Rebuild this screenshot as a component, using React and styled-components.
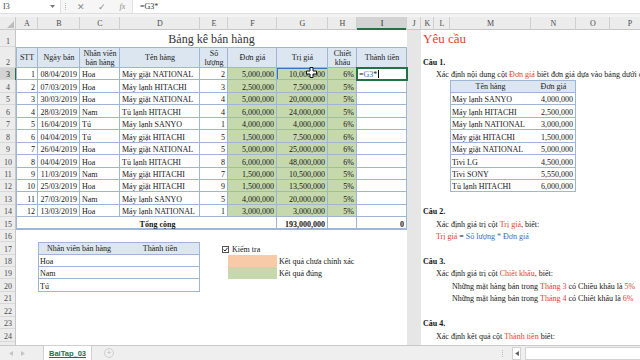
import React from 'react';
import styled, { createGlobalStyle } from 'styled-components';

const SERIF = `"Liberation Serif", "Times New Roman", serif`;
const SANS = `"Liberation Sans", Arial, sans-serif`;

const GlobalStyle = createGlobalStyle`
  html, body { margin: 0; padding: 0; background: #fff; }
  body { font-family: ${SERIF}; }
`;

const TB = '#9fb5d6';
const HEAD_BLUE = '#dce6f1';
const GREEN = '#c6d9ad';
const ORANGE = '#f8caa8';
const RED = '#e2412f';
const BLUE = '#2f72b8';
const ROW_H = 12.45;
const COLS = [16, 22, 42, 40, 80, 28, 49, 51, 29, 50, 14, 13, 16, 81, 45, 34, 40];
const LETTERS = ['A', 'B', 'C', 'D', 'E', 'F', 'G', 'H', 'I', 'J', 'K', 'L', 'M', 'N', 'O', 'P'];
const C = LETTERS.reduce((o, l, i) => ({ ...o, [l]: i + 2 }), {});

const shadow = (p) => {
  const s = [];
  if (p.$bt) s.push(`inset 0 1px 0 ${p.$bt}`);
  if (p.$bb) s.push(`inset 0 -${p.$bbw || 1}px 0 ${p.$bb}`);
  if (p.$bl) s.push(`inset 1px 0 0 ${p.$bl}`);
  if (p.$br) s.push(`inset -1px 0 0 ${p.$br}`);
  if (p.$ring) s.push(`inset 0 0 0 1px ${p.$ring}`);
  return s.length ? s.join(', ') : 'none';
};

const bd = (sides, color = TB) => {
  const o = {};
  if (sides.includes('t')) o.$bt = color;
  if (sides.includes('b')) o.$bb = color;
  if (sides.includes('l')) o.$bl = color;
  if (sides.includes('r')) o.$br = color;
  return o;
};

const Frame = styled.div`
  width: 640px;
  height: 360px;
  overflow: hidden;
  display: flex;
  flex-direction: column;
  background: #fff;
`;

/* ---------- formula bar ---------- */
const FormulaBar = styled.div`
  height: 14px;
  flex: 0 0 14px;
  display: flex;
  align-items: stretch;
  background: #f6f6f6;
  border-bottom: 1px solid #dedede;
  box-sizing: border-box;
  font-family: ${SERIF};
  font-size: 8px;
  color: #444;
`;

const NameBox = styled.div`
  width: 61px;
  display: flex;
  align-items: center;
  justify-content: space-between;
  padding: 0 5px 0 3px;
  box-sizing: border-box;
  background: #fff;
  border-right: 1px solid #e0e0e0;
`;

const BarIcons = styled.div`
  width: 71px;
  display: flex;
  align-items: center;
  color: #8a8a8a;
  font-family: ${SANS};
`;

const BarIcon = styled.span`
  width: ${(p) => p.$w}px;
  text-align: center;
  font-size: ${(p) => p.$size || 9}px;
  font-style: ${(p) => (p.$italic ? 'italic' : 'normal')};
  font-family: ${(p) => (p.$italic ? SERIF : SANS)};
  color: #8a8a8a;
`;

const Grip = styled.span`
  width: 0;
  height: 7px;
  margin: 0 5px 0 4px;
  border-left: 1px dotted #b8b8b8;
`;

const FormulaInput = styled.div`
  flex: 1;
  display: flex;
  align-items: center;
  padding-left: 7px;
  background: #fff;
  border-left: 1px solid #e0e0e0;
  color: #333;
`;

const Band = styled.div`
  height: 3px;
  flex: 0 0 3px;
  background: #f3f3f3;
`;

/* ---------- sheet grid ---------- */
const Sheet = styled.div`
  flex: 1 1 auto;
  min-height: 0;
  display: grid;
  grid-template-columns: ${COLS.map((c) => `${c}px`).join(' ')};
  grid-template-rows: 13px 17px 21px repeat(23, ${ROW_H}px);
  overflow: hidden;
  font-family: ${SERIF};
  font-size: 8px;
  color: #151515;
`;

const Corner = styled.div`
  grid-row: 1;
  grid-column: 1;
  background: #ececec;
  box-shadow: inset -1px -1px 0 #c9c9c9;
  position: relative;
  &::after {
    content: '';
    position: absolute;
    right: 2px;
    bottom: 2px;
    border-left: 7px solid transparent;
    border-bottom: 7px solid #bdbdbd;
  }
`;

const ColHead = styled.div`
  grid-row: 1;
  grid-column: ${(p) => p.$c};
  display: flex;
  align-items: center;
  justify-content: center;
  background: ${(p) => (p.$sel ? '#d3d3d3' : '#ececec')};
  color: ${(p) => (p.$sel ? '#222' : '#4a4a4a')};
  box-shadow: inset -1px 0 0 #cfcfcf, inset 0 ${(p) => (p.$sel ? '-2px 0 #217346' : '-1px 0 #c6c6c6')};
  font-size: 8px;
`;

const RowHead = styled.div`
  grid-row: ${(p) => p.$r + 1};
  grid-column: 1;
  display: flex;
  align-items: flex-end;
  justify-content: center;
  padding-bottom: 1px;
  box-sizing: border-box;
  background: ${(p) => (p.$sel ? '#d3d3d3' : '#ececec')};
  color: ${(p) => (p.$sel ? '#222' : '#4a4a4a')};
  box-shadow: inset -1px 0 0 ${(p) => (p.$sel ? '#217346' : '#c6c6c6')}, inset 0 -1px 0 #d8d8d8;
  font-size: 8px;
`;

const GrayCol = styled.div`
  grid-row: 2 / span 25;
  grid-column: ${C.J};
  background: #e6e6e6;
`;

const Cell = styled.div`
  grid-row: ${(p) => p.$r + 1};
  grid-column: ${(p) => p.$c} / span ${(p) => p.$s || 1};
  position: relative;
  min-width: 0;
  box-sizing: border-box;
  display: flex;
  align-items: ${(p) => p.$v || 'flex-end'};
  justify-content: ${(p) => (p.$align === 'right' ? 'flex-end' : p.$align === 'center' ? 'center' : 'flex-start')};
  padding: 0 ${(p) => (p.$align === 'right' ? 3 : 2)}px 1px ${(p) => p.$pl ?? 2}px;
  white-space: nowrap;
  overflow: visible;
  background: ${(p) => p.$bg || 'transparent'};
  font-weight: ${(p) => (p.$bold ? 700 : 400)};
  font-size: ${(p) => p.$size || 8}px;
  color: ${(p) => p.$color || '#151515'};
  line-height: ${(p) => (p.$size ? p.$size + 2 : 9)}px;
  box-shadow: ${shadow};
`;

const HeadCell = styled(Cell)`
  align-items: center;
  justify-content: center;
  text-align: center;
  white-space: normal;
  padding: 0 1px;
  background: ${HEAD_BLUE};
  line-height: 9px;
  color: #222;
`;

const EditCell = styled(Cell)`
  background: #fff;
  outline: 2px solid #217346;
  outline-offset: -1px;
  z-index: 2;
`;

const Red = styled.span`
  color: ${RED};
`;
const Blue = styled.span`
  color: ${BLUE};
`;
const Ref = styled.span`
  color: #3d6fc4;
`;

const TextCaret = styled.span`
  display: inline-block;
  width: 1px;
  height: 8px;
  margin-left: 1px;
  background: #111;
  align-self: center;
`;

const CursorMark = styled.svg`
  position: absolute;
  left: 29px;
  top: -1px;
  z-index: 3;
`;

const CheckLabel = styled.span`
  display: inline-flex;
  align-items: center;
  gap: 3px;
`;

/* ---------- tab bar ---------- */
const TabBar = styled.div`
  height: 15px;
  flex: 0 0 15px;
  display: flex;
  align-items: stretch;
  background: #efefef;
  border-top: 1px solid #c8c8c8;
  box-sizing: border-box;
  font-family: ${SANS};
`;

const NavArrows = styled.div`
  width: 44px;
  display: flex;
  align-items: center;
  gap: 8px;
  padding-left: 9px;
  box-sizing: border-box;
`;

const SheetTab = styled.div`
  width: 47px;
  display: flex;
  align-items: center;
  justify-content: center;
  background: #fff;
  color: #217346;
  font-weight: 700;
  font-size: 7.5px;
  box-shadow: 0 0 0 1px #d0d0d0;
  position: relative;
  &::after {
    content: '';
    position: absolute;
    left: 5px;
    right: 5px;
    bottom: 2px;
    height: 1.5px;
    background: #217346;
  }
`;

const AddSheet = styled.div`
  margin-left: 13px;
  width: 8px;
  height: 8px;
  align-self: center;
  border-radius: 50%;
  border: 1px solid #cfcfcf;
  color: #b5b5b5;
  font-size: 7px;
  line-height: 8px;
  text-align: center;
`;

const ScrollArea = styled.div`
  margin-left: auto;
  width: 142px;
  display: flex;
  align-items: center;
  gap: 4px;
`;

const ScrollBtn = styled.div`
  width: 7px;
  height: 11px;
  border: 1px solid #d2d2d2;
  background: #fff;
  display: flex;
  align-items: center;
  justify-content: center;
`;

const ScrollTrack = styled.div`
  flex: 1;
  height: 11px;
  border: 1px solid #d2d2d2;
  border-right: none;
  background: #fff;
`;

const Tri = ({ dir = 'left', color = '#c4c4c4' }) => (
  <svg width="4" height="5" viewBox="0 0 4 5">
    <path d={dir === 'left' ? 'M4 0 L0 2.5 L4 5 Z' : 'M0 0 L4 2.5 L0 5 Z'} fill={color} />
  </svg>
);

/* ---------- data ---------- */
const sales = [
  [1, '08/04/2019', 'Hoa', 'Máy giặt NATIONAL', 2, '5,000,000', '10,000,000', '6%'],
  [2, '07/03/2019', 'Hoa', 'Máy lạnh HITACHI', 3, '2,500,000', '7,500,000', '5%'],
  [3, '30/03/2019', 'Hoa', 'Máy giặt NATIONAL', 4, '5,000,000', '20,000,000', '5%'],
  [4, '28/03/2019', 'Nam', 'Tủ lạnh HITACHI', 4, '6,000,000', '24,000,000', '5%'],
  [5, '16/04/2019', 'Tú', 'Máy lạnh SANYO', 1, '4,000,000', '4,000,000', '6%'],
  [6, '04/04/2019', 'Tú', 'Máy giặt HITACHI', 5, '1,500,000', '7,500,000', '6%'],
  [7, '26/04/2019', 'Hoa', 'Máy giặt NATIONAL', 5, '5,000,000', '25,000,000', '6%'],
  [8, '04/04/2019', 'Hoa', 'Tủ lạnh HITACHI', 8, '6,000,000', '48,000,000', '6%'],
  [9, '11/03/2019', 'Nam', 'Máy giặt HITACHI', 7, '1,500,000', '10,500,000', '5%'],
  [10, '25/03/2019', 'Hoa', 'Máy giặt HITACHI', 9, '1,500,000', '13,500,000', '5%'],
  [11, '27/03/2019', 'Nam', 'Máy lạnh SANYO', 5, '4,000,000', '20,000,000', '5%'],
  [12, '13/03/2019', 'Hoa', 'Máy lạnh NATIONAL', 1, '3,000,000', '3,000,000', '5%'],
];

const priceList = [
  ['Máy lạnh SANYO', '4,000,000'],
  ['Máy lạnh HITACHI', '2,500,000'],
  ['Máy lạnh NATIONAL', '3,000,000'],
  ['Máy giặt HITACHI', '1,500,000'],
  ['Máy giặt NATIONAL', '5,000,000'],
  ['Tivi LG', '4,500,000'],
  ['Tivi SONY', '5,550,000'],
  ['Tủ lạnh HITACHI', '6,000,000'],
];

const headers = [
  ['A', 'STT'],
  ['B', 'Ngày bán'],
  ['C', <>Nhân viên<br />bán hàng</>],
  ['D', 'Tên hàng'],
  ['E', <>Số<br />lượng</>],
  ['F', 'Đơn giá'],
  ['G', 'Trị giá'],
  ['H', <>Chiết<br />khấu</>],
  ['I', 'Thành tiền'],
];

function SalesRow({ row, data }) {
  const [stt, date, name, prod, qty, price, value, disc] = data;
  const first = row === 3;
  return (
    <>
      <Cell $r={row} $c={C.A} $align="right" {...bd('lrb')}>{stt}</Cell>
      <Cell $r={row} $c={C.B} $align="right" {...bd('rb')}>{date}</Cell>
      <Cell $r={row} $c={C.C} {...bd('rb')}>{name}</Cell>
      <Cell $r={row} $c={C.D} {...bd('rb')}>{prod}</Cell>
      <Cell $r={row} $c={C.E} $align="right" {...bd('rb')}>{qty}</Cell>
      <Cell $r={row} $c={C.F} $align="right" $bg={GREEN} {...bd('rb')}>{price}</Cell>
      <Cell $r={row} $c={C.G} $align="right" $bg={GREEN} {...bd('rb')} $ring={first ? '#3d6fc4' : undefined}>
        {value}
        {first && (
          <CursorMark width="11" height="11" viewBox="0 0 22 22">
            <path d="M8 1 H14 V8 H21 V14 H14 V21 H8 V14 H1 V8 H8 Z" fill="#fff" stroke="#111" strokeWidth="2" />
          </CursorMark>
        )}
      </Cell>
      <Cell $r={row} $c={C.H} $align="right" $bg={GREEN} {...bd('rb')}>{disc}</Cell>
      {first ? (
        <EditCell $r={row} $c={C.I} {...bd('rb')}>
          =<Ref>G3</Ref>*<TextCaret />
        </EditCell>
      ) : (
        <Cell $r={row} $c={C.I} {...bd('rb')} />
      )}
    </>
  );
}

export default function App() {
  return (
    <>
      <GlobalStyle />
      <Frame>
        <FormulaBar>
          <NameBox>
            <span>I3</span>
            <svg width="5" height="3" viewBox="0 0 5 3">
              <path d="M0 0 H5 L2.5 3 Z" fill="#777" />
            </svg>
          </NameBox>
          <BarIcons>
            <Grip />
            <BarIcon $w={20} $size={9}>✕</BarIcon>
            <BarIcon $w={22} $size={9}>✓</BarIcon>
            <BarIcon $w={19} $size={8} $italic>fx</BarIcon>
          </BarIcons>
          <FormulaInput>=G3*</FormulaInput>
        </FormulaBar>
        <Band />
        <Sheet>
          <Corner />
          {LETTERS.map((l) => (
            <ColHead key={l} $c={C[l]} $sel={l === 'I'}>{l}</ColHead>
          ))}
          {Array.from({ length: 25 }, (_, i) => (
            <RowHead key={i} $r={i + 1} $sel={i + 1 === 3}>{i + 1}</RowHead>
          ))}
          <GrayCol />

          {/* Row 1: title */}
          <Cell $r={1} $c={C.A} $s={9} $align="center" $size={12} $color="#333">Bảng kê bán hàng</Cell>

          {/* Row 2: headers */}
          {headers.map(([col, label]) => (
            <HeadCell key={col} $r={2} $c={C[col]} {...bd(col === 'A' ? 'tlrb' : 'trb')}>{label}</HeadCell>
          ))}

          {sales.map((d, i) => (
            <SalesRow key={i} row={i + 3} data={d} />
          ))}

          {/* Row 15: totals */}
          <Cell $r={15} $c={C.A} {...bd('lb')} $bbw={2} />
          <Cell $r={15} $c={C.B} $s={5} $align="center" $bold {...bd('rb')} $bbw={2}>Tổng cộng</Cell>
          <Cell $r={15} $c={C.G} $align="right" $bold {...bd('rb')} $bbw={2}>193,000,000</Cell>
          <Cell $r={15} $c={C.H} {...bd('rb')} $bbw={2} />
          <Cell $r={15} $c={C.I} $align="right" $bold {...bd('rb')} $bbw={2}>0</Cell>

          {/* Summary table rows 17-20 */}
          <HeadCell $r={17} $c={C.B} $s={2} {...bd('tlb')}>Nhân viên bán hàng</HeadCell>
          <HeadCell $r={17} $c={C.D} {...bd('trb')}>Thành tiền</HeadCell>
          {['Hoa', 'Nam', 'Tú'].map((n, i) => (
            <Cell key={n} $r={18 + i} $c={C.B} $s={3} {...bd('lrb')}>{n}</Cell>
          ))}

          {/* Legend */}
          <Cell $r={17} $c={C.E} $s={3} $pl={22}>
            <CheckLabel>
              <svg width="7" height="7" viewBox="0 0 7 7">
                <rect x="0.5" y="0.5" width="6" height="6" fill="#fff" stroke="#555" />
                <path d="M1.5 3.6 L3 5 L5.6 1.8" fill="none" stroke="#222" strokeWidth="1" />
              </svg>
              Kiểm tra
            </CheckLabel>
          </Cell>
          <Cell $r={18} $c={C.F} $bg={ORANGE} />
          <Cell $r={18} $c={C.G} $s={3}>Kết quả chưa chính xác</Cell>
          <Cell $r={19} $c={C.F} $bg={GREEN} />
          <Cell $r={19} $c={C.G} $s={3}>Kết quả đúng</Cell>

          {/* Right pane */}
          <Cell $r={1} $c={C.K} $s={6} $size={13} $color={RED}>Yêu cầu</Cell>
          <Cell $r={2} $c={C.K} $s={6} $bold>Câu 1.</Cell>
          <Cell $r={3} $c={C.L} $s={5}>
            Xác định nội dung cột&nbsp;<Red>Đơn giá</Red>&nbsp;biết đơn giá dựa vào bảng dưới đây
          </Cell>
          <HeadCell $r={4} $c={C.M} {...bd('tlb')}>Tên hàng</HeadCell>
          <HeadCell $r={4} $c={C.N} {...bd('trb')}>Đơn giá</HeadCell>
          {priceList.map(([n, p], i) => (
            <React.Fragment key={n}>
              <Cell $r={5 + i} $c={C.M} {...bd('lb')}>{n}</Cell>
              <Cell $r={5 + i} $c={C.N} $align="right" {...bd('rb')}>{p}</Cell>
            </React.Fragment>
          ))}

          <Cell $r={14} $c={C.K} $s={6} $bold>Câu 2.</Cell>
          <Cell $r={15} $c={C.L} $s={5}>
            Xác định giá trị cột&nbsp;<Red>Trị giá</Red>, biết:
          </Cell>
          <Cell $r={16} $c={C.L} $s={5}>
            <Red>Trị giá</Red>&nbsp;=&nbsp;<Blue>Số lượng * Đơn giá</Blue>
          </Cell>

          <Cell $r={18} $c={C.K} $s={6} $bold>Câu 3.</Cell>
          <Cell $r={19} $c={C.L} $s={5}>
            Xác định giá trị cột&nbsp;<Red>Chiết khấu</Red>, biết:
          </Cell>
          <Cell $r={20} $c={C.M} $s={4}>
            Những mặt hàng bán trong&nbsp;<Red>Tháng 3</Red>&nbsp;có Chiều khấu là&nbsp;<Red>5%</Red>
          </Cell>
          <Cell $r={21} $c={C.M} $s={4}>
            Những mặt hàng bán trong&nbsp;<Red>Tháng 4</Red>&nbsp;có Chiết khấu là&nbsp;<Red>6%</Red>
          </Cell>

          <Cell $r={23} $c={C.K} $s={6} $bold>Câu 4.</Cell>
          <Cell $r={24} $c={C.L} $s={5}>
            Xác định kết quả cột&nbsp;<Red>Thành tiền</Red>&nbsp;biết:
          </Cell>
          <Cell $r={25} $c={C.M} $s={4}>
            <Red>Thành tiền</Red>&nbsp;=&nbsp;<Blue>Trị giá * (1 - Chiết khấu)</Blue>
          </Cell>
        </Sheet>
        <TabBar>
          <NavArrows>
            <Tri dir="left" />
            <Tri dir="right" />
          </NavArrows>
          <SheetTab>BaiTap_03</SheetTab>
          <AddSheet>+</AddSheet>
          <ScrollArea>
            <Grip />
            <ScrollBtn>
              <Tri dir="left" color="#666" />
            </ScrollBtn>
            <ScrollTrack />
          </ScrollArea>
        </TabBar>
      </Frame>
    </>
  );
}
